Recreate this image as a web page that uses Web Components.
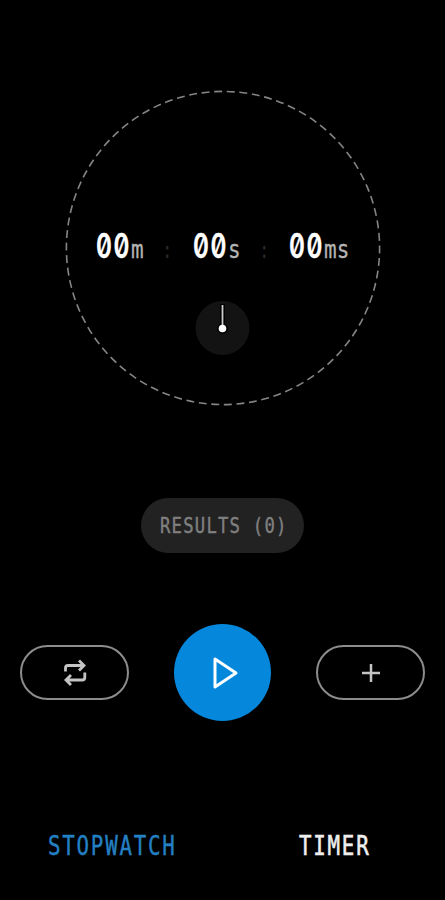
<!DOCTYPE html>
<html lang="en">
<head>
  <meta charset="UTF-8">
  <meta name="viewport" content="width=device-width, initial-scale=1.0">
  <title>Stopwatch</title>
  <style>
    html, body {
      margin: 0;
      height: 100%;
      background: #000;
    }
  </style>
</head>
<body>
  <stopwatch-app></stopwatch-app>

  <script>
    // Condensed monospace text. The glyphs are squeezed, the box keeps its own width.
    class MonoText extends HTMLElement {
      constructor() {
        super();
        this.attachShadow({ mode: 'open' });

        const template = document.createElement('template');
        template.innerHTML = `
          <style>
            :host {
              display: block;
              flex: none;
              width: var(--width);
              height: var(--size);
              font: var(--weight, 400) var(--size)/1 var(--family, "DejaVu Sans Mono", monospace);
              white-space: nowrap;
            }

            span {
              display: inline-block;
              letter-spacing: var(--spacing, 0);
              transform: scaleX(var(--squeeze, 0.75));
              transform-origin: 0 50%;
              font-feature-settings: "zero" 1;
              -webkit-text-stroke: var(--stroke, 0);
            }
          </style>
          <span><slot></slot></span>
        `;
        this.shadowRoot.appendChild(template.content.cloneNode(true));
      }
    }

    class TimeUnit extends HTMLElement {
      constructor() {
        super();
        this.attachShadow({ mode: 'open' });

        const template = document.createElement('template');
        template.innerHTML = `
          <style>
            :host {
              display: flex;
              align-items: baseline;
              width: 96.5px;
            }

            .value {
              --width: 35px;
              --size: 33.5px;
              --family: Inter, sans-serif;
              --weight: 600;
              --squeeze: 0.72;
              --spacing: 2.2px;
              --stroke: 0.3px;
              color: #fff;
            }

            .unit {
              --width: 31px;
              --size: 25px;
              --squeeze: 0.84;
              --stroke: 0.3px;
              color: #b4b4b4;
            }

            .colon {
              --width: 10px;
              --size: 23px;
              color: #292929;
            }
          </style>
          <mono-text class="value"><slot></slot></mono-text>
          <mono-text class="unit">${this.getAttribute('unit')}</mono-text>
          ${this.hasAttribute('last') ? '' : '<mono-text class="colon">:</mono-text>'}
        `;
        this.shadowRoot.appendChild(template.content.cloneNode(true));
      }
    }

    class StopwatchDial extends HTMLElement {
      constructor() {
        super();
        this.attachShadow({ mode: 'open' });

        const template = document.createElement('template');
        template.innerHTML = `
          <style>
            :host {
              display: grid;
              width: 316px;
              height: 316px;
            }

            .ring, .content {
              grid-area: 1 / 1;
            }

            .content {
              display: flex;
              flex-direction: column;
              padding: 140px 0 0 31px;
            }

            .time {
              display: flex;
              height: 34px;
            }

            .hand {
              margin: 37px 0 0 99px;
            }
          </style>
          <svg class="ring" width="316" height="316" viewBox="0 0 316 316" fill="none">
            <circle cx="158" cy="158" r="156.6" stroke="#858585" stroke-width="1.6"
              pathLength="780" stroke-dasharray="6.3 3.7" stroke-dashoffset="2"/>
          </svg>
          <div class="content">
            <div class="time">
              <time-unit unit="m">00</time-unit>
              <time-unit unit="s">00</time-unit>
              <time-unit unit="ms" last>00</time-unit>
            </div>
            <svg class="hand" width="55" height="54" viewBox="0 0 55 54">
              <circle cx="27.5" cy="27" r="27" fill="#131313"/>
              <circle cx="27.5" cy="27.500" r="5.4" fill="#000"/>
              <path d="M27.5 27V3" stroke="#000" stroke-width="5"/>
              <path d="M27.5 27V4" stroke="#ccc" stroke-width="1.8"/>
              <circle cx="27.5" cy="27.500" r="3.8" fill="#fff"/>
            </svg>
          </div>
        `;
        this.shadowRoot.appendChild(template.content.cloneNode(true));
      }
    }

    class ResultsButton extends HTMLElement {
      constructor() {
        super();
        this.attachShadow({ mode: 'open' });

        const template = document.createElement('template');
        template.innerHTML = `
          <style>
            :host {
              display: flex;
              align-items: center;
              box-sizing: border-box;
              width: 163px;
              height: 55px;
              padding: 1px 0 0 18.5px;
              border-radius: 28px;
              background: #222;
              color: #808080;
              --width: 130px;
              --size: 21px;
              --squeeze: 0.82;
              --spacing: 1.5px;
              --stroke: 0.4px;
            }
          </style>
          <mono-text><slot></slot></mono-text>
        `;
        this.shadowRoot.appendChild(template.content.cloneNode(true));
      }
    }

    class ControlButton extends HTMLElement {
      constructor() {
        super();
        this.attachShadow({ mode: 'open' });

        const template = document.createElement('template');
        template.innerHTML = `
          <style>
            :host {
              display: flex;
              align-items: center;
              justify-content: center;
              box-sizing: border-box;
              width: 109px;
              height: 55px;
              border: 2px solid #8c8c8c;
              border-radius: 28px;
              color: #c4c4c4;
            }

            :host([primary]) {
              width: 97px;
              height: 97px;
              border: 0;
              border-radius: 50%;
              background: #0587dc;
              color: #fff;
            }
          </style>
          <slot></slot>
        `;
        this.shadowRoot.appendChild(template.content.cloneNode(true));
      }
    }

    class TabLink extends HTMLElement {
      constructor() {
        super();
        this.attachShadow({ mode: 'open' });

        const template = document.createElement('template');
        template.innerHTML = `
          <style>
            :host {
              display: block;
              color: #eee;
              --size: 26px;
              --squeeze: 0.8;
              --spacing: 2.2px;
              --stroke: 0.6px;
            }

            :host([active]) {
              color: #2380c4;
              --stroke: 0.4px;
            }
          </style>
          <mono-text><slot></slot></mono-text>
        `;
        this.shadowRoot.appendChild(template.content.cloneNode(true));
      }
    }

    class StopwatchApp extends HTMLElement {
      constructor() {
        super();
        this.attachShadow({ mode: 'open' });

        const template = document.createElement('template');
        template.innerHTML = `
          <style>
            :host {
              display: flex;
              flex-direction: column;
              box-sizing: border-box;
              width: 445px;
              height: 900px;
              padding-top: 90px;
              overflow: hidden;
              background: #000;
            }

            stopwatch-dial {
              margin-left: 65px;
            }

            results-button {
              margin: 92px 0 0 141px;
            }

            .controls {
              display: flex;
              align-items: center;
              gap: 45px;
              margin: 71px 0 0 20px;
            }

            nav {
              display: flex;
              justify-content: space-between;
              margin: 112px 75px 0 48px;
            }
          </style>
          <stopwatch-dial></stopwatch-dial>
          <results-button>RESULTS (0)</results-button>
          <div class="controls">
            <control-button>
              <svg width="26" height="28" viewBox="0 0 26 28" fill="none" stroke="currentColor" stroke-width="2.8">
                <path d="M3.500 12.500V9Q3.500 6.500 6 6.500H22M17 1.500L22 6.500L17 11.500"/>
                <path d="M22.800 13.500V18.500Q22.800 21 20.300 21H4.500M9 16L4 21L9 26"/>
              </svg>
            </control-button>
            <control-button primary>
              <svg width="32" height="36" viewBox="0 0 32 36" fill="none" stroke="currentColor" stroke-width="3" stroke-linejoin="round">
                <path d="M8 4V32L29 18Z"/>
              </svg>
            </control-button>
            <control-button>
              <svg width="20" height="20" viewBox="0 0 20 20" stroke="currentColor" stroke-width="2.5">
                <path d="M10 1V19M1 10H19"/>
              </svg>
            </control-button>
          </div>
          <nav>
            <tab-link active style="--width: 130px">STOPWATCH</tab-link>
            <tab-link style="--width: 71px">TIMER</tab-link>
          </nav>
        `;
        this.shadowRoot.appendChild(template.content.cloneNode(true));
      }
    }

    // Define the custom elements
    customElements.define('mono-text', MonoText);
    customElements.define('time-unit', TimeUnit);
    customElements.define('stopwatch-dial', StopwatchDial);
    customElements.define('results-button', ResultsButton);
    customElements.define('control-button', ControlButton);
    customElements.define('tab-link', TabLink);
    customElements.define('stopwatch-app', StopwatchApp);
  </script>
</body>
</html>
